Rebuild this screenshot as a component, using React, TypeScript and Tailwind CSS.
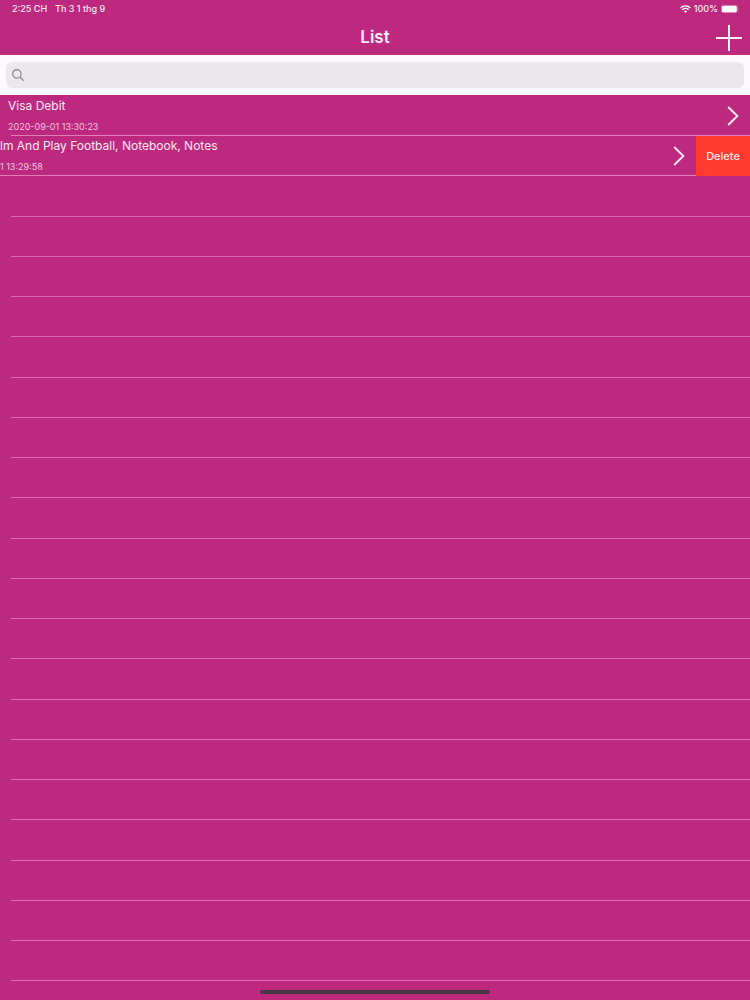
import React from "react";

const emptyRows = Array.from({ length: 20 }, (_, i) => i + 3);

function rowHeight(n: number) {
  return n === 1 || n % 4 === 3 ? "h-[41px]" : "h-10";
}

function Chevron() {
  return (
    <svg className="h-5 w-3 shrink-0" viewBox="0 0 12 20" fill="none" stroke="#fdeefa" strokeWidth="1.8" aria-hidden="true">
      <path d="M1.2 1 10.4 10 1.2 19" />
    </svg>
  );
}

function RowText({ title, date }: { title: string; date: string }) {
  return (
    <div>
      <p className="text-[12px] leading-[21px]">{title}</p>
      <p className="text-[9px] leading-[21px] text-[#f3c2e1]">{date}</p>
    </div>
  );
}

function StatusBar() {
  return (
    <div className="flex h-[18px] items-center justify-between pl-3 pr-[11px] text-[9px] font-medium text-[#fdeaf7]">
      <div className="flex gap-2">
        <span>2:25 CH</span>
        <span>Th 3 1 thg 9</span>
      </div>
      <div className="flex items-center gap-[3px]">
        <svg className="h-2 w-[11px]" viewBox="0 0 11 8" fill="none" stroke="#ffffff" strokeWidth="1.4" aria-hidden="true">
          <path d="M.6 2.9a7 7 0 0 1 9.8 0M2.4 4.8a4.4 4.4 0 0 1 6.2 0" />
          <path d="M3.9 6.2a2.3 2.3 0 0 1 3.2 0L5.5 7.9z" fill="#ffffff" stroke="none" />
        </svg>
        <span>100%</span>
        <svg className="h-2 w-[18px]" viewBox="0 0 18 8" aria-hidden="true">
          <rect x=".3" y=".3" width="16" height="7.4" rx="2" fill="none" stroke="#e58bc4" strokeWidth=".6" />
          <rect x=".8" y=".8" width="15" height="6.4" rx="1.5" fill="#ffffff" />
          <path d="M17 2.8q1 1.2 0 2.4z" fill="#e58bc4" />
        </svg>
      </div>
    </div>
  );
}

export default function App() {
  return (
    <div className="relative flex min-h-screen flex-col overflow-hidden bg-[#bc297e] font-[Inter,'Liberation_Sans',sans-serif] text-[#fdeaf7]">
      <StatusBar />
      <header className="grid h-[37px] grid-cols-[1fr_auto_1fr] items-center px-2">
        <h1 className="col-start-2 text-[17px] font-semibold leading-5 text-[#fdeefa]">List</h1>
        <button type="button" aria-label="Add" className="mt-0.5 justify-self-end">
          <svg className="size-[26px]" viewBox="0 0 26 26" stroke="#ffeefb" strokeWidth="2" aria-hidden="true">
            <path d="M13 0v26M0 13h26" />
          </svg>
        </button>
      </header>
      <div className="bg-[#fdf7fe] px-[6px] py-[7px]">
        <label className="flex h-[26px] items-center rounded-md bg-[#ebe8ed] px-[6px]">
          <svg className="size-3 shrink-0" viewBox="0 0 12 12" fill="none" stroke="#858087" strokeWidth="1.2" aria-hidden="true">
            <circle cx="4.9" cy="4.9" r="4.2" />
            <path d="m8 8 3.7 3.7" />
          </svg>
          <input type="search" aria-label="Search" className="ml-2 min-w-0 flex-1 bg-transparent text-[13px] text-gray-800 outline-none" />
        </label>
      </div>
      <ul>
        <li className={`relative flex items-center justify-between pl-2 pr-[11px] ${rowHeight(1)}`}>
          <RowText title="Visa Debit" date="2020-09-01 13:30:23" />
          <Chevron />
          <span className="absolute bottom-0 left-[11px] right-0 h-px bg-[#de7fb9]" />
        </li>
        <li className={`flex ${rowHeight(2)}`}>
          <div className="flex min-w-0 flex-1 items-center justify-between border-b border-[#de7fb9] pr-[11px]">
            <RowText title="lm And Play Football, Notebook, Notes" date="1 13:29:58" />
            <Chevron />
          </div>
          <button type="button" className="w-[54px] bg-[#ff3b30] text-[11px] font-medium text-[#ffe5e6]">Delete</button>
        </li>
        {emptyRows.map((n) => (
          <li key={n} className={`ml-[11px] border-b border-[#dc6fb0] ${rowHeight(n)}`} />
        ))}
      </ul>
      <div className="absolute bottom-[6px] left-1/2 h-1 w-[230px] -translate-x-1/2 rounded-full bg-[#463641]" />
    </div>
  );
}
